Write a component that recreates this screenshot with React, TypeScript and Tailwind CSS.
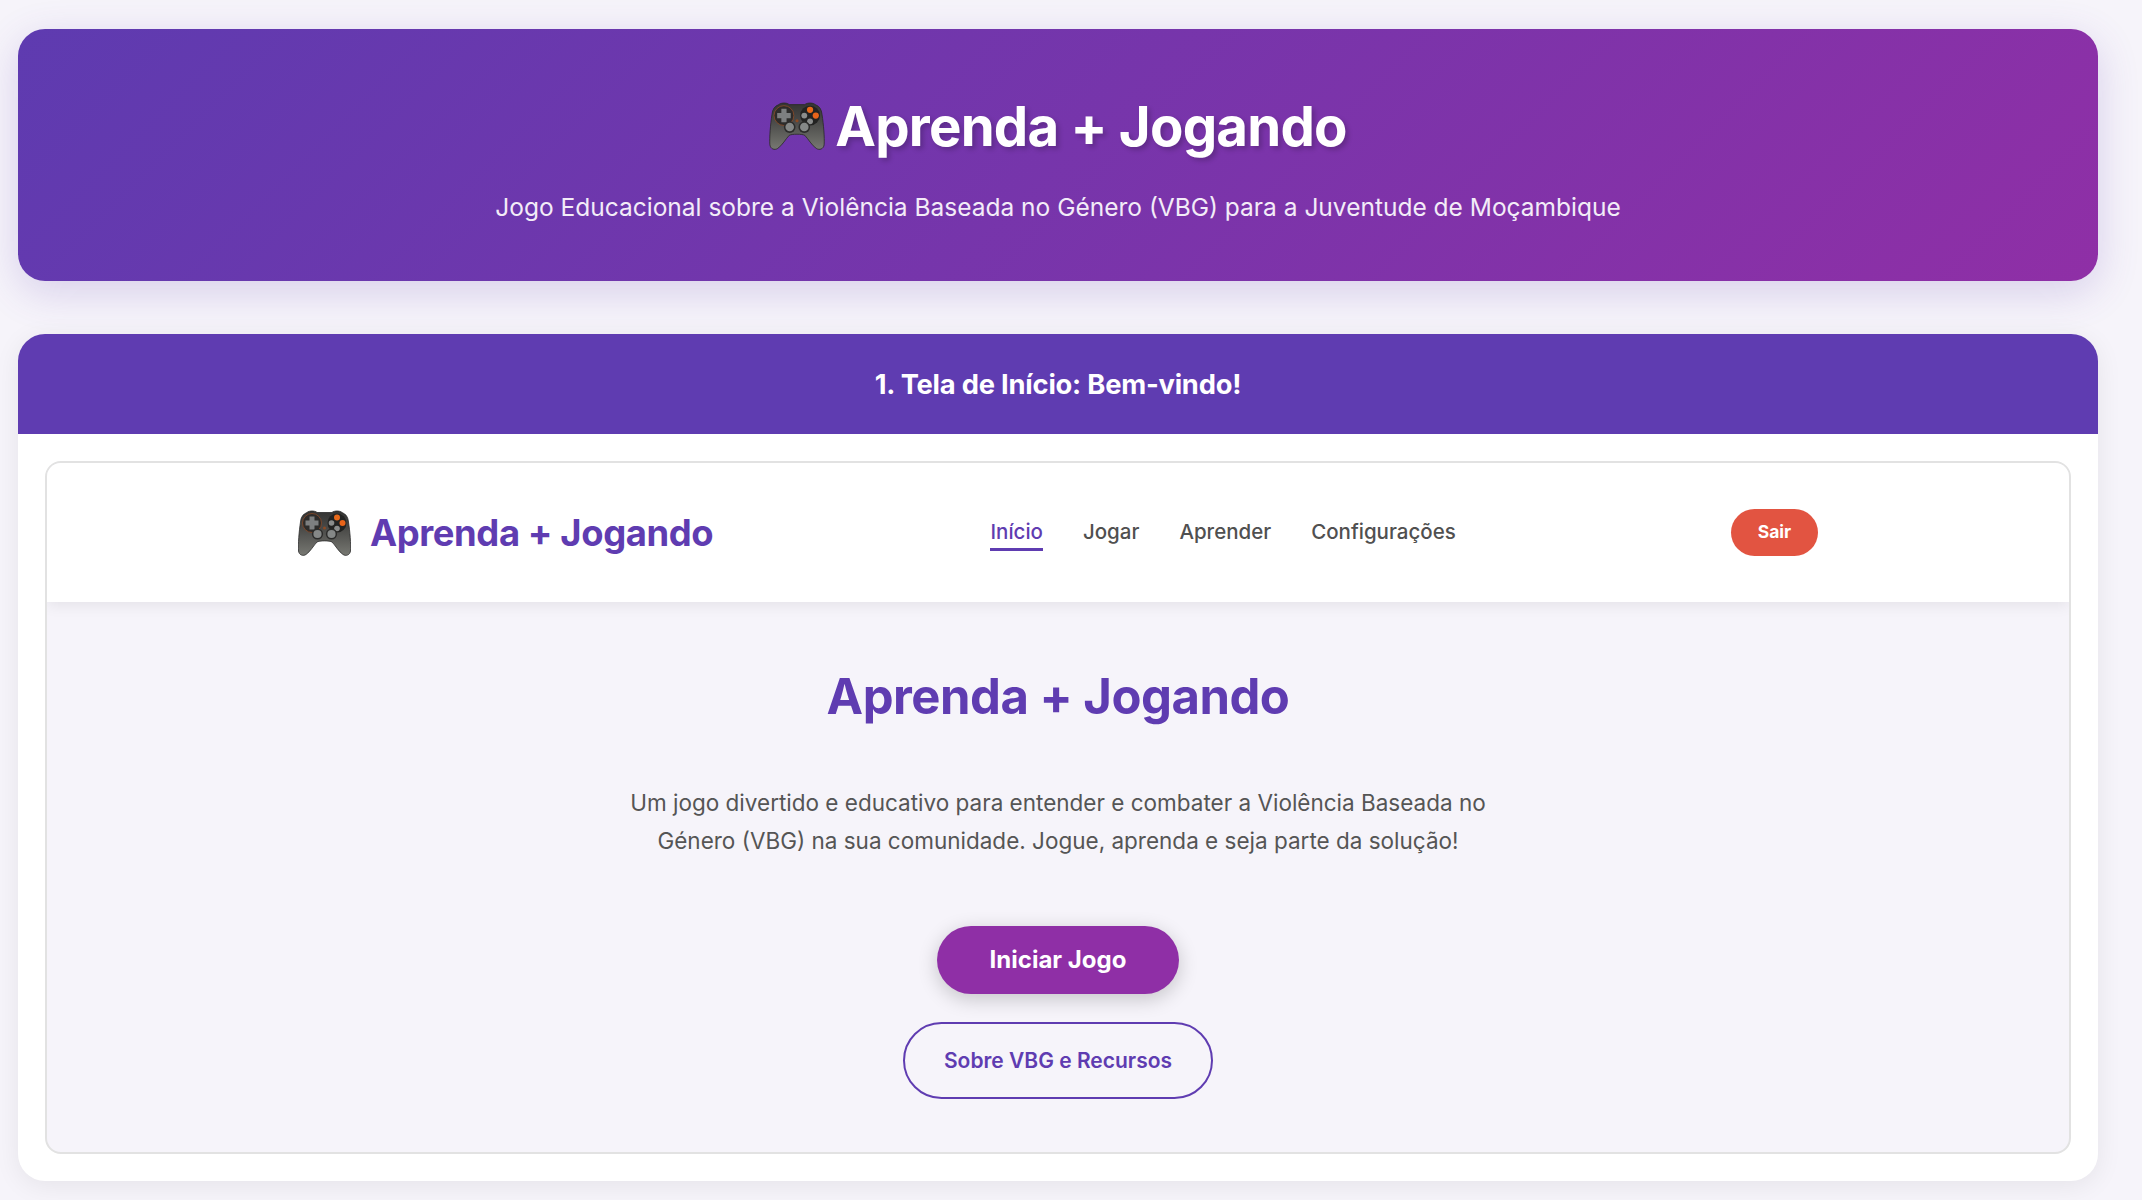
const Gamepad = ({ className }: { className: string }) => (
  <svg viewBox="0 0 53 46" className={className}>
    <defs>
      <linearGradient id="padBody" x1="0" y1="0" x2="0" y2="1">
        <stop offset="0" stopColor="#343433" />
        <stop offset="0.4" stopColor="#4a4a48" />
        <stop offset="1" stopColor="#777872" />
      </linearGradient>
    </defs>
    <path d="M9 2.5 C11 .5 17 .5 19 2.5 L34 2.5 C36 .5 42 .5 44 2.5 C48 4 50 7 50.5 12 C52 22 53 34 52.5 41 C52 45 48 46.5 45 44.5 C41 42 37 35 34 32 C32 30.5 21 30.5 19 32 C16 35 12 42 8 44.5 C5 46.5 1 45 .5 41 C0 34 1 22 2.5 12 C3 7 5 4 9 2.5 Z" fill="url(#padBody)" stroke="#2a2a29" strokeWidth="0.8" />
    <circle cx="14" cy="13" r="9.5" fill="#2d2c2b" stroke="#8a4a28" strokeWidth="0.8" />
    <path d="M11.5 6.5 h5 v4 h4 v5 h-4 v4 h-5 v-4 h-4 v-5 h4 Z" fill="#7d7f80" />
    <circle cx="39" cy="13" r="9.5" fill="#232322" />
    <circle cx="39" cy="7.5" r="3" fill="#e8691a" />
    <circle cx="44.5" cy="13" r="3" fill="#e8641a" />
    <circle cx="33.5" cy="13" r="2.8" fill="#8b8d8c" />
    <circle cx="39" cy="18.5" r="2.8" fill="#8b8d8c" />
    <circle cx="26.5" cy="18" r="1.5" fill="#8c4a24" />
    <circle cx="19.5" cy="24" r="5.6" fill="#2c2c2b" />
    <circle cx="19.5" cy="24" r="4.1" fill="#858887" />
    <circle cx="33.5" cy="24" r="5.6" fill="#2c2c2b" />
    <circle cx="33.5" cy="24" r="4.1" fill="#858887" />
  </svg>
);

const navLinks = ["Início", "Jogar", "Aprender", "Configurações"];

export default function App() {
  return (
    <div className="min-h-[1200px] bg-[#f6f4fa] pt-[29px] pl-[18px] font-['Inter',sans-serif]">
      <div className="w-[2080px]">
        {/* Cabeçalho */}
        <header className="flex h-[252px] flex-col items-center justify-center rounded-[27px] bg-[linear-gradient(135deg,#5e3bb0,#8f2fa6)] pt-[9px] text-white shadow-[0_11px_41px_rgba(94,59,176,0.2)]">
          <h1 className="flex items-center gap-[10px] text-[54.6px] leading-[66px] font-bold tracking-[-0.8px] [text-shadow:3px_3px_5px_rgba(0,0,0,0.2)]">
            <Gamepad className="h-[48px] w-[56px]" />
            Aprenda + Jogando
          </h1>
          <p className="mt-[29px] text-[24.5px] leading-[38px] text-[#f3ecf8]">
            Jogo Educacional sobre a Violência Baseada no Género (VBG) para a Juventude de Moçambique
          </p>
        </header>

        {/* Tela de início */}
        <section className="mt-[53px] overflow-hidden rounded-[27px] bg-white shadow-[0_5px_27px_rgba(0,0,0,0.07)]">
          <div className="flex h-[100px] items-center justify-center bg-[#5f3cb1] pt-[2px] text-[27.3px] font-bold tracking-[-0.2px] text-white">
            1. Tela de Início: Bem-vindo!
          </div>
          <div className="p-[27px]">
            <div className="overflow-hidden rounded-[16px] border-2 border-[#e2e2e2] bg-[#f6f4fa]">
              <nav className="bg-white shadow-[0_3px_14px_rgba(0,0,0,0.08)]">
                <div className="mx-auto flex h-[139px] w-[1520px] items-center justify-between pt-[2px]">
                  <div className="flex items-center gap-[19px] text-[36.4px] font-bold tracking-[-0.4px] text-[#5f3cb1]">
                    <Gamepad className="h-[46px] w-[53px]" />
                    Aprenda + Jogando
                  </div>
                  <ul className="flex items-center gap-[40px] pt-[1px] pl-[2px] text-[20.5px] font-medium text-[#505050]">
                    {navLinks.map((link, i) => (
                      <li
                        key={link}
                        className={i === 0 ? "border-b-[3px] border-[#5f3cb1] text-[#5f3cb1]" : "border-b-[3px] border-transparent"}
                      >
                        {link}
                      </li>
                    ))}
                  </ul>
                  <button className="-mt-[2px] h-[47px] w-[87px] rounded-full bg-[#e25441] text-[17.5px] font-bold text-white">Sair</button>
                </div>
              </nav>

              <div className="flex flex-col items-center pt-[65px] pb-[53px]">
                <h2 className="text-[49px] leading-[60px] font-bold tracking-[-0.5px] text-[#5f3cb1]">Aprenda + Jogando</h2>
                <p className="mt-[57px] w-[880px] text-center text-[22.5px] leading-[38px] text-[#555555]">
                  Um jogo divertido e educativo para entender e combater a Violência Baseada no Género (VBG) na sua comunidade. Jogue, aprenda e seja parte da solução!
                </p>
                <button className="mt-[66px] h-[68px] w-[242px] rounded-full bg-[#8f2fa6] text-[24px] font-bold text-white shadow-[0_5px_20px_rgba(0,0,0,0.2)]">
                  Iniciar Jogo
                </button>
                <button className="mt-[28px] h-[77px] w-[310px] rounded-full border-2 border-[#5f3cb1] text-[21px] font-semibold text-[#5f3cb1]">
                  Sobre VBG e Recursos
                </button>
              </div>
            </div>
          </div>
        </section>
      </div>
    </div>
  );
}
